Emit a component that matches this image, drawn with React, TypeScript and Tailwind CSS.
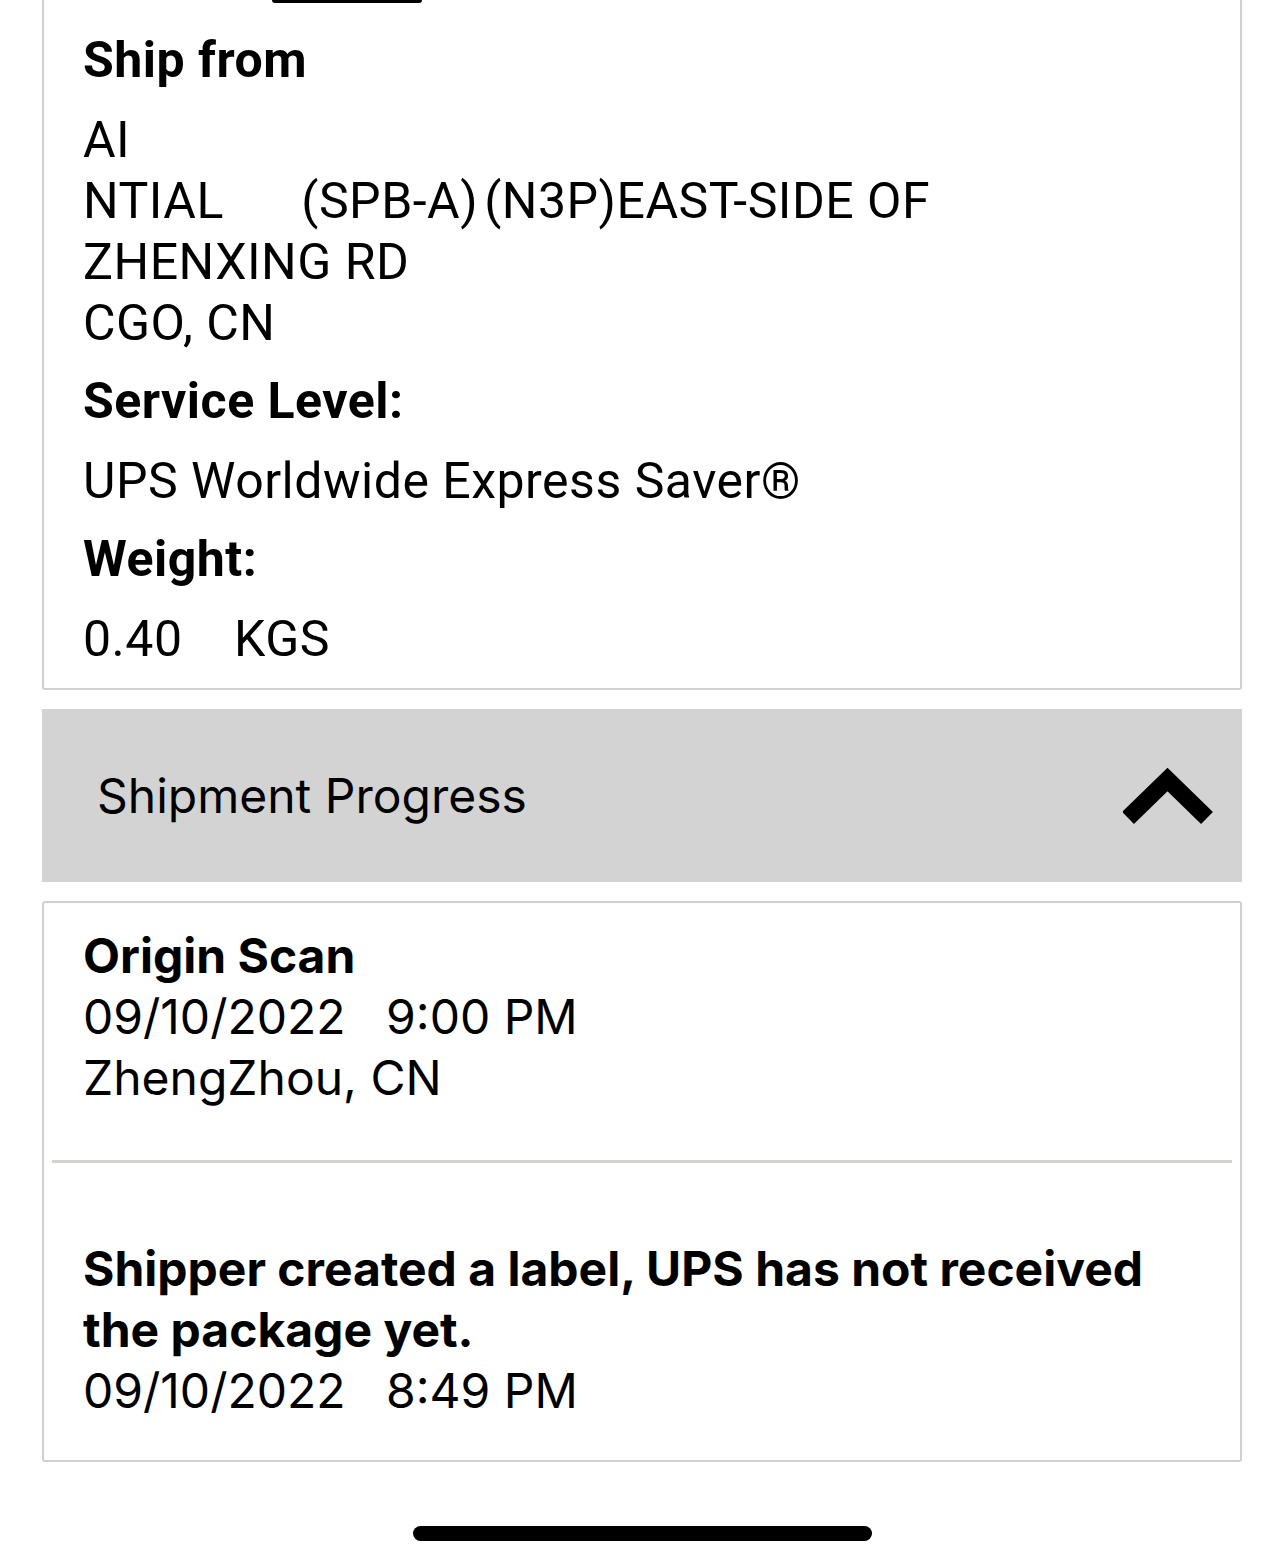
import React from 'react';

const upper = { fontFamily: 'Roboto, "Liberation Sans", sans-serif' };
const lower = { fontFamily: 'Inter, "Liberation Sans", sans-serif' };

const ShipmentPage: React.FC = () => {
  return (
    <div className="w-[1284px] h-[1564px] bg-white text-black overflow-hidden">
      <div className="px-[42px]">
        {/* Ship details card (scrolled, top cut off) */}
        <div
          className="border-2 border-t-0 border-[#d0d0d0] rounded-b-[3px] pl-[39px] pr-6 pb-[18px] text-[50px] tracking-[0.5px]"
          style={upper}
        >
          <div className="h-[3px] w-[150px] ml-[189px] bg-black rounded-b-full" />
          <div className="mt-[27px] leading-[61px] font-bold">Ship from</div>
          <div className="mt-[19px] leading-[61px] whitespace-pre">
            <div>AI</div>
            <div>
              NTIAL      (SPB-A)<span className="ml-[6px]">(N3P)EAST-SIDE OF</span>
            </div>
            <div>ZHENXING RD</div>
            <div>CGO, CN</div>
          </div>
          <div className="mt-[17px] leading-[61px] font-bold">Service Level:</div>
          <div className="mt-[19px] leading-[61px]">UPS Worldwide Express Saver®</div>
          <div className="mt-[17px] leading-[61px] font-bold">Weight:</div>
          <div className="mt-[19px] leading-[61px] whitespace-pre">0.40    KGS</div>
        </div>

        {/* Shipment Progress header */}
        <div className="mt-[19px] h-[173px] bg-[#d3d3d3] flex items-center justify-between pl-[55px] pr-[29px]">
          <span className="text-[48px] leading-none" style={lower}>
            Shipment Progress
          </span>
          <svg width="90" height="58" viewBox="0 0 90 58" className="mt-[1px]">
            <polyline
              points="5,51 44.5,12.5 84,51"
              fill="none"
              stroke="black"
              strokeWidth="17"
              strokeLinecap="butt"
              strokeLinejoin="miter"
            />
          </svg>
        </div>

        {/* Progress list */}
        <div
          className="mt-[19px] border-2 border-[#d0d0d0] rounded-[3px] text-[48px] leading-[61px]"
          style={lower}
        >
          <div className="pl-[39px] pr-6 pt-[22px] pb-[52px]">
            <div className="font-bold">Origin Scan</div>
            <div className="whitespace-pre">09/10/2022   9:00 PM</div>
            <div>ZhengZhou, CN</div>
          </div>
          <div className="mx-[8px] h-[3px] bg-[#d4d1ce]" />
          <div className="pl-[39px] pr-6 pt-[75px] pb-[39px]">
            <div className="font-bold">
              Shipper created a label, UPS has not received the package yet.
            </div>
            <div className="whitespace-pre">09/10/2022   8:49 PM</div>
          </div>
        </div>
      </div>

      {/* Home indicator */}
      <div className="mt-[64px] flex justify-center">
        <div className="w-[459px] h-[15px] rounded-full bg-black" />
      </div>
    </div>
  );
};

export default ShipmentPage;
